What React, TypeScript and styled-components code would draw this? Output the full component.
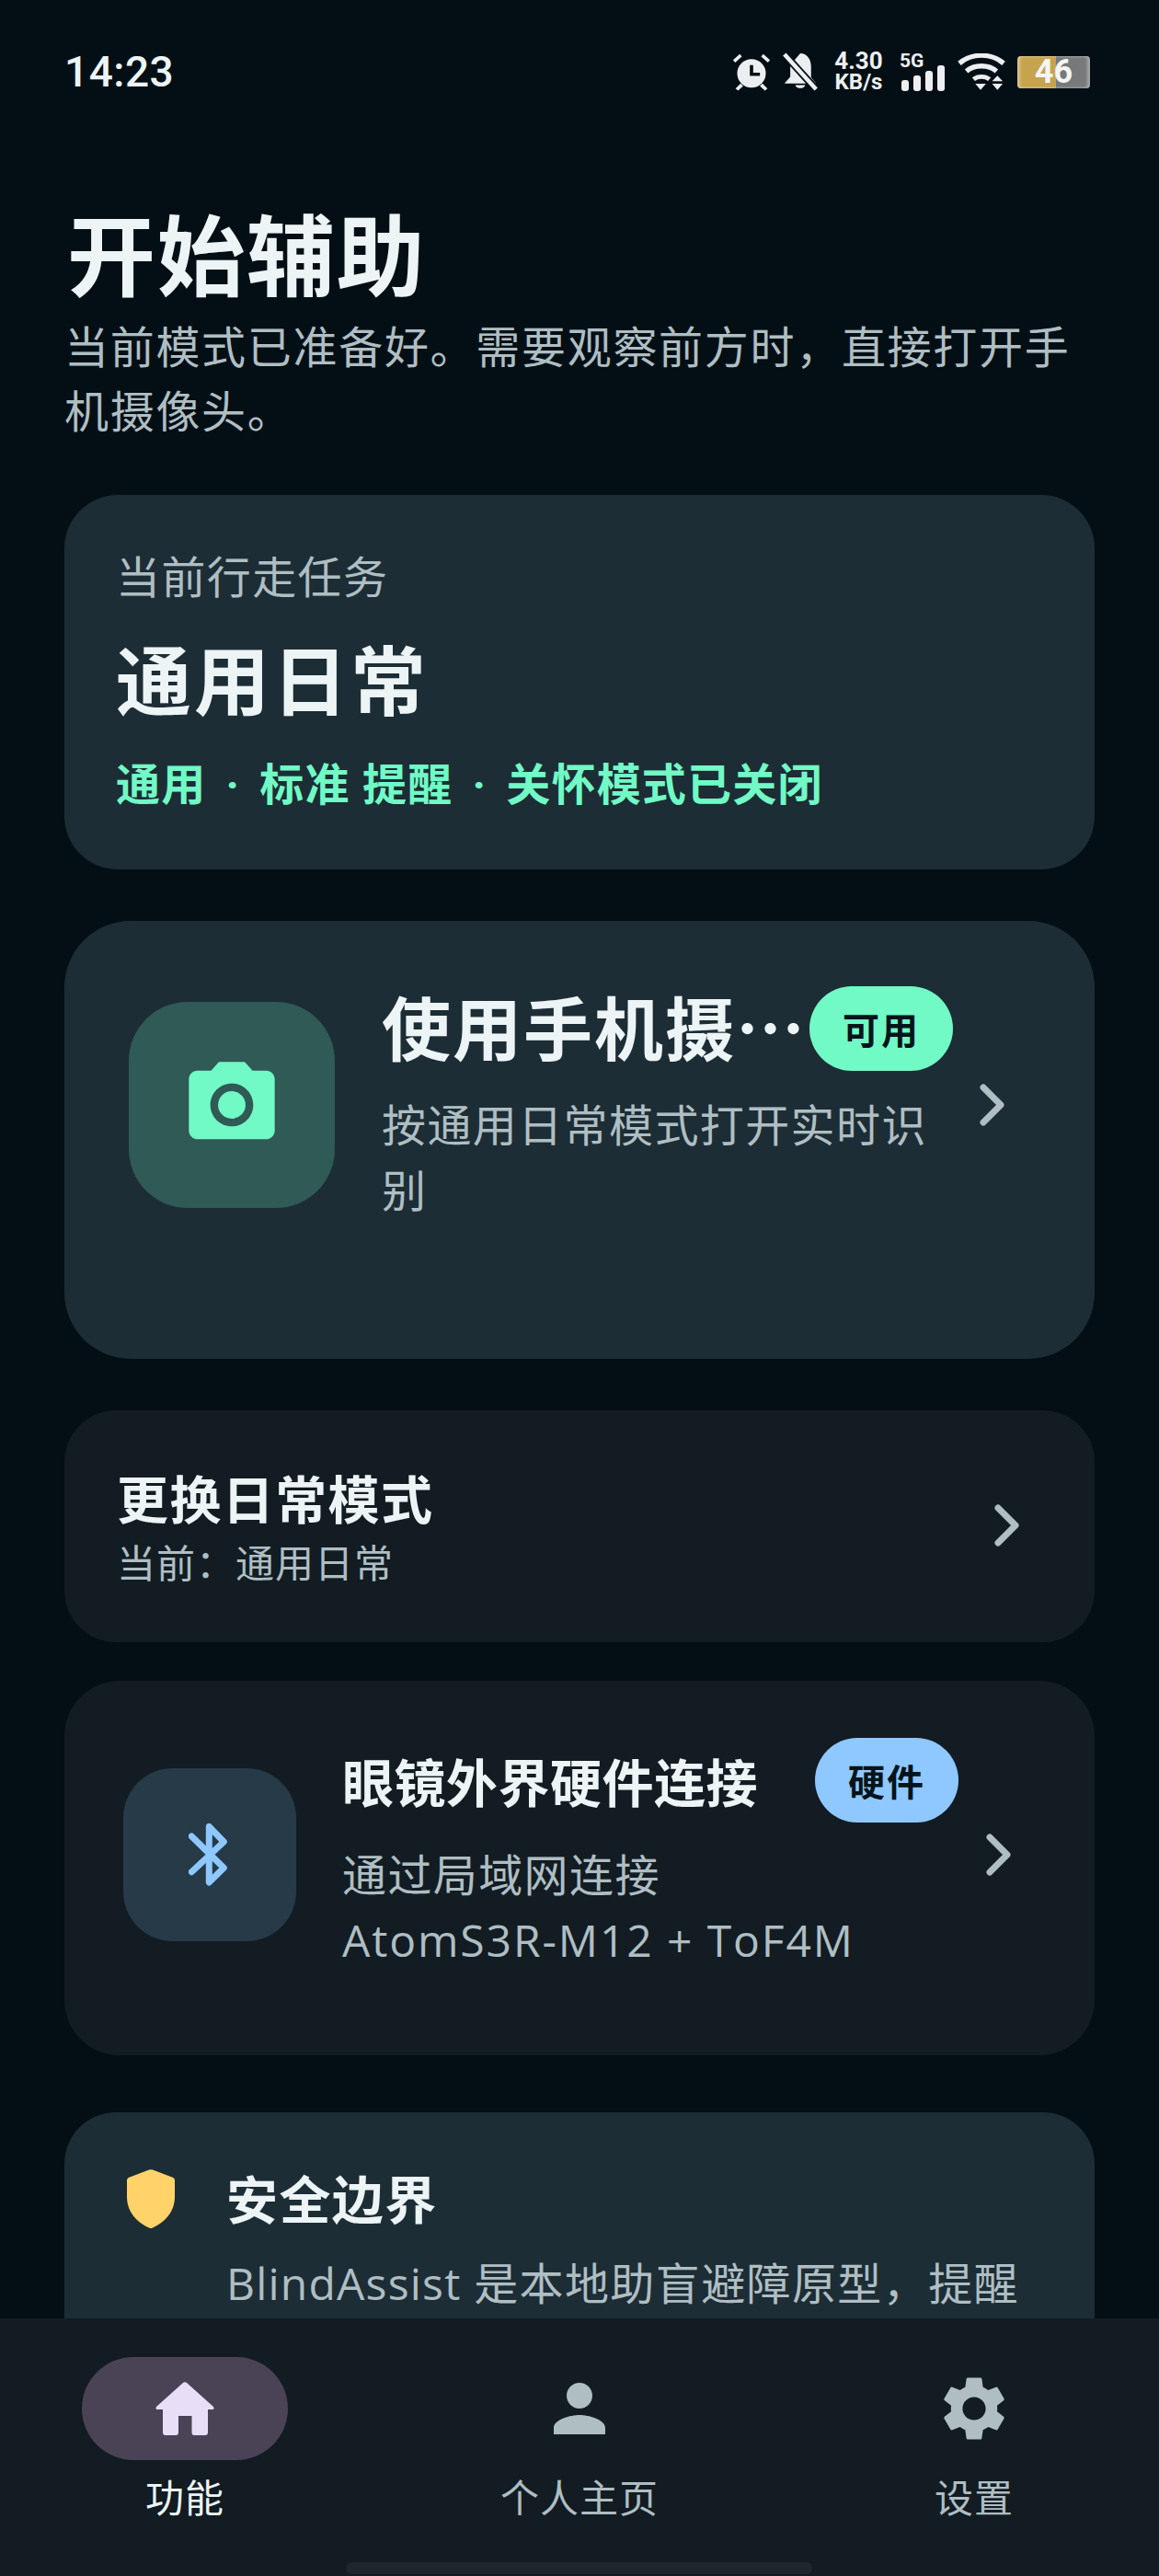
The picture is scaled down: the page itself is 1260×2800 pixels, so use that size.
import React from 'react';
import styled, { createGlobalStyle } from 'styled-components';
import { MdPerson, MdPhotoCamera, MdSettings } from 'react-icons/md';

const GlobalStyle = createGlobalStyle`
  html, body {
    margin: 0;
    padding: 0;
    background: #040f15;
  }
  * {
    box-sizing: border-box;
  }
`;

const cjk = `"Noto Sans CJK SC", sans-serif`;
const latin = `Roboto, "Noto Sans CJK SC", sans-serif`;
const prose = `"Open Sans", "Noto Sans CJK SC", sans-serif`;

const Screen = styled.div`
  width: 1260px;
  height: 2800px;
  display: flex;
  flex-direction: column;
  overflow: hidden;
  background: #040f15;
  font-family: ${latin};
  color: #ecf4f6;
`;

const StatusBar = styled.div`
  flex: none;
  height: 197px;
  padding: 48px 75px 0 70px;
  display: flex;
  align-items: flex-start;
  justify-content: space-between;
`;

const Clock = styled.div`
  font-size: 46px;
  line-height: 60px;
  font-weight: 500;
  letter-spacing: 0.5px;
`;

const StatusIcons = styled.div`
  display: flex;
  align-items: center;
  gap: 13px;
  height: 60px;
`;

const Speed = styled.div`
  width: 53px;
  font-size: 26px;
  line-height: 23px;
  font-weight: 700;
  text-align: center;
  white-space: nowrap;
  color: #eceff1;
  margin: 0 5px;
  display: flex;
  flex-direction: column;
  align-items: center;
`;

const SpeedUnit = styled.span`
  font-size: 24px;
`;

const Net = styled.div`
  position: relative;
  width: 50px;
  height: 41px;
  display: flex;
  align-items: flex-end;
  justify-content: flex-end;
`;

const NetLabel = styled.span`
  position: absolute;
  left: 0;
  top: -3px;
  font-size: 21px;
  line-height: 22px;
  font-weight: 700;
  color: #eceff1;
`;

const Battery = styled.div`
  width: 79px;
  height: 35px;
  border-radius: 4px;
  display: flex;
  align-items: center;
  justify-content: center;
  background: linear-gradient(90deg, #c6a44e 0 53%, #77797a 53% 100%);
  box-shadow: inset 3px 0 3px rgba(255, 255, 255, 0.35), inset -3px 0 3px rgba(255, 255, 255, 0.35);
  font-size: 36px;
  font-weight: 700;
  color: #f5f5f5;
`;

const Scroll = styled.main`
  flex: 1;
  min-height: 0;
  overflow: hidden;
  padding: 10px 70px 0;
  display: flex;
  flex-direction: column;
`;

const PageTitle = styled.h1`
  margin: 0;
  font-family: ${cjk};
  font-size: 96px;
  line-height: 132px;
  font-weight: 700;
  letter-spacing: 1.5px;
  padding-left: 3px;
`;

const PageIntro = styled.p`
  margin: 0 0 59px;
  font-family: ${cjk};
  font-size: 48px;
  line-height: 70px;
  letter-spacing: 1.7px;
  color: #afbec3;
`;

const Card = styled.section<{ $tone?: 'raised' | 'flat'; $radius?: number }>`
  flex: none;
  border-radius: ${(p) => p.$radius ?? 56}px;
  background: ${(p) => (p.$tone === 'flat' ? '#121c22' : '#1d2d35')};
`;

const TaskCard = styled(Card)`
  height: 407px;
  padding: 46px 56px 0;
  margin-bottom: 56px;
`;

const TaskLabel = styled.div`
  font-family: ${cjk};
  font-size: 48px;
  line-height: 80px;
  letter-spacing: 1.4px;
  color: #afbec3;
`;

const TaskName = styled.div`
  margin-top: 15px;
  font-family: ${cjk};
  font-size: 82px;
  line-height: 114px;
  font-weight: 700;
  letter-spacing: 3px;
`;

const TaskMeta = styled.div`
  margin-top: 29px;
  font-size: 48px;
  line-height: 64px;
  font-weight: 700;
  letter-spacing: 1.2px;
  color: #71f9c6;
  white-space: pre;
`;

const MetaDot = styled.span`
  margin: 0 8px;
`;

const ActionCard = styled(Card)<{ $pad: string; $height: number; $after: number }>`
  height: ${(p) => p.$height}px;
  margin-bottom: ${(p) => p.$after}px;
  padding: ${(p) => p.$pad};
  display: flex;
  align-items: center;
`;

const IconTile = styled.div<{ $size: number; $bg: string; $color: string; $after: number }>`
  flex: none;
  width: ${(p) => p.$size}px;
  height: ${(p) => p.$size}px;
  margin-right: ${(p) => p.$after}px;
  border-radius: ${(p) => Math.round(p.$size * 0.287)}px;
  background: ${(p) => p.$bg};
  color: ${(p) => p.$color};
  display: flex;
  align-items: center;
  justify-content: center;
`;

const ActionBody = styled.div`
  flex: 1;
  min-width: 0;
`;

const TitleRow = styled.div`
  height: 92px;
  display: flex;
  align-items: center;
`;

const ActionTitle = styled.div<{ $size: number; $spacing: number; $width: number; $lift?: number }>`
  width: ${(p) => p.$width}px;
  flex: none;
  margin-bottom: ${(p) => p.$lift ?? 0}px;
  font-family: ${cjk};
  font-size: ${(p) => p.$size}px;
  line-height: 1.2;
  font-weight: 700;
  letter-spacing: ${(p) => p.$spacing}px;
  white-space: nowrap;
`;

const Badge = styled.span<{ $color: string }>`
  flex: none;
  width: 156px;
  height: 92px;
  border-radius: 46px;
  background: ${(p) => p.$color};
  display: flex;
  align-items: center;
  justify-content: center;
  font-family: ${cjk};
  font-size: 40px;
  font-weight: 700;
  letter-spacing: 2px;
  color: #06141a;
`;

const ActionText = styled.div<{ $top: number }>`
  margin-top: ${(p) => p.$top}px;
  font-family: ${prose};
  font-size: 48px;
  line-height: 71px;
  letter-spacing: 1.4px;
  color: #afbec3;
`;

const LatinRun = styled.span<{ $spacing: number }>`
  letter-spacing: ${(p) => p.$spacing}px;
`;

const ChevronBox = styled.div`
  flex: none;
  width: 60px;
  display: flex;
  justify-content: center;
  color: #afbec3;
`;

const ModeCard = styled(Card)`
  height: 252px;
  margin-bottom: 42px;
  padding: 0 65px 3px 57px;
  display: flex;
  align-items: center;
`;

const ModeTitle = styled.div`
  margin-bottom: 3px;
  font-family: ${cjk};
  font-size: 56px;
  line-height: 76px;
  font-weight: 700;
  letter-spacing: 1.4px;
`;

const ModeSub = styled.div`
  font-family: ${cjk};
  font-size: 42px;
  line-height: 58px;
  letter-spacing: 1px;
  color: #afbec3;
`;

const SafetyCard = styled(Card)`
  padding: 62px 60px 0 68px;
  display: flex;
  gap: 56px;
  height: 400px;
`;

const SafetyTitle = styled.div`
  margin-top: -8px;
  font-family: ${cjk};
  font-size: 56px;
  line-height: 76px;
  font-weight: 700;
  letter-spacing: 1.4px;
`;

const SafetyText = styled.div`
  margin-top: 20px;
  font-family: ${prose};
  font-size: 48px;
  line-height: 71px;
  letter-spacing: 1.4px;
  color: #afbec3;
  white-space: nowrap;
`;

const BottomNav = styled.nav`
  flex: none;
  position: relative;
  height: 280px;
  background: #121c22;
  padding-top: 42px;
  display: grid;
  grid-template-columns: 402px 456px 402px;
  justify-items: center;
  align-items: start;
`;

const NavItem = styled.div`
  display: flex;
  flex-direction: column;
  align-items: center;
`;

const NavPill = styled.div<{ $active?: boolean }>`
  width: 224px;
  height: 112px;
  border-radius: 56px;
  display: flex;
  align-items: center;
  justify-content: center;
  background: ${(p) => (p.$active ? '#4a4356' : 'transparent')};
  color: ${(p) => (p.$active ? '#e9def8' : '#afbec3')};
`;

const NavLabel = styled.div<{ $active?: boolean }>`
  margin-top: 10px;
  font-family: ${cjk};
  font-size: 42px;
  line-height: 58px;
  letter-spacing: 1px;
  color: ${(p) => (p.$active ? '#ecf4f6' : '#afbec3')};
`;

const HomeIndicator = styled.div`
  position: absolute;
  left: 376px;
  bottom: 2px;
  width: 507px;
  height: 13px;
  border-radius: 6px;
  background: #1e272e;
`;

const Chevron: React.FC = () => (
  <svg width="30" height="48" viewBox="0 0 30 48" fill="none">
    <path d="M5 5 L24 24 L5 43" stroke="currentColor" strokeWidth="7" strokeLinecap="round" strokeLinejoin="round" />
  </svg>
);

const AlarmIcon: React.FC = () => (
  <svg width="42" height="42" viewBox="0 0 46 46" fill="#eceff1">
    <circle cx="23" cy="25" r="17" />
    <path d="M9 2 L1 9 L3.500 12 L11.500 5 Z M37 2 L45 9 L42.500 12 L34.500 5 Z M10 37 L4 43 L7 45.500 L13 40 Z M36 37 L42 43 L39 45.500 L33 40 Z" />
    <path d="M21 15 H25 V24 H33 V28 H21 Z" fill="#040f15" />
  </svg>
);

const MutedBellIcon: React.FC = () => (
  <svg width="38" height="42" viewBox="0 0 42 46" fill="#eceff1">
    <path d="M21 1 C29 1 34 8 34 17 V30 L40 37 H2 L9 29 V15 Z" />
    <path d="M15 39 H27 C26 44 16 44 15 39 Z" />
    <path d="M2 2 L40 44" stroke="#040f15" strokeWidth="9" />
    <path d="M2 2 L40 44" stroke="#eceff1" strokeWidth="5" />
  </svg>
);

const SignalIcon: React.FC = () => (
  <svg width="48" height="28" viewBox="0 0 48 28" fill="#eceff1">
    <rect x="0" y="16" width="8" height="12" rx="3" />
    <rect x="13" y="11" width="8" height="17" rx="3" />
    <rect x="26" y="6" width="8" height="22" rx="3" />
    <rect x="39" y="0" width="8" height="28" rx="3" />
  </svg>
);

const WifiIcon: React.FC = () => (
  <svg width="52" height="41" viewBox="0 0 54 42" fill="none" stroke="#eceff1" strokeWidth="5.500">
    <path d="M2 11 C16 -1 38 -1 52 11" />
    <path d="M10 20 C19 12 35 12 44 20" />
    <path d="M18 29 C23 25 31 25 36 29" strokeWidth="5" />
    <path d="M20 34 H32 L26 41 Z M39 31 L45 25 L51 31 Z M39 34 H51 L45 41 Z" fill="#eceff1" stroke="none" />
  </svg>
);

const BluetoothIcon: React.FC = () => (
  <svg width="46" height="68" viewBox="0 0 46 68" fill="none">
    <path
      d="M3.300 14 L38.300 48.300 L22.300 64 V3.300 L38.300 20 L3.300 52.700"
      stroke="currentColor"
      strokeWidth="7"
      strokeLinecap="round"
      strokeLinejoin="round"
    />
  </svg>
);

const ShieldIcon: React.FC = () => (
  <svg width="52" height="64" viewBox="0 0 52 64" fill="#ffd369">
    <path d="M24 .5 Q26 -.2 28 .5 L49 8.500 Q52 9.500 52 12 V30 C52 46 41 58 27.500 63.700 Q26 64.300 24.500 63.700 C11 58 0 46 0 30 V12 Q0 9.500 3 8.500 Z" />
  </svg>
);

const HomeIcon: React.FC = () => (
  <svg width="64" height="58" viewBox="0 0 64 58" fill="currentColor">
    <path d="M30 1 Q32 -.5 34 1 L63 27 Q64.500 30 62 30 H57 V55 Q57 58 54 58 H42 Q39.500 58 39.500 55 V37 H25 V55 Q25 58 22 58 H11 Q8 58 8 55 V30 H2 Q-.5 30 1 27 Z" />
  </svg>
);

const App: React.FC = () => (
  <Screen>
    <GlobalStyle />
    <StatusBar>
      <Clock>14:23</Clock>
      <StatusIcons>
        <AlarmIcon />
        <MutedBellIcon />
        <Speed>
          <span>4.30</span>
          <SpeedUnit>KB/s</SpeedUnit>
        </Speed>
        <Net>
          <NetLabel>5G</NetLabel>
          <SignalIcon />
        </Net>
        <WifiIcon />
        <Battery>46</Battery>
      </StatusIcons>
    </StatusBar>

    <Scroll>
      <PageTitle>开始辅助</PageTitle>
      <PageIntro>当前模式已准备好。需要观察前方时，直接打开手机摄像头。</PageIntro>

      <TaskCard $radius={58}>
        <TaskLabel>当前行走任务</TaskLabel>
        <TaskName>通用日常</TaskName>
        <TaskMeta>
          通用 <MetaDot>·</MetaDot> 标准 提醒 <MetaDot>·</MetaDot> 关怀模式已关闭
        </TaskMeta>
      </TaskCard>

      <ActionCard $radius={72} $pad="73px 81px 150px 70px" $height={476} $after={56}>
        <IconTile $size={224} $bg="#2f5a55" $color="#71f9c6" $after={51}>
          <MdPhotoCamera size={112} />
        </IconTile>
        <ActionBody>
          <TitleRow>
            <ActionTitle $size={75} $spacing={2} $width={465} $lift={6}>
              使用手机摄…
            </ActionTitle>
            <Badge $color="#71f9c6">可用</Badge>
          </TitleRow>
          <ActionText $top={23}>按通用日常模式打开实时识别</ActionText>
        </ActionBody>
        <ChevronBox>
          <Chevron />
        </ChevronBox>
      </ActionCard>

      <ModeCard $tone="flat">
        <ActionBody>
          <ModeTitle>更换日常模式</ModeTitle>
          <ModeSub>当前：通用日常</ModeSub>
        </ActionBody>
        <ChevronBox>
          <Chevron />
        </ChevronBox>
      </ModeCard>

      <ActionCard $tone="flat" $radius={60} $pad="64px 74px 93px 64px" $height={407} $after={62}>
        <IconTile $size={188} $bg="#263a48" $color="#8fc8ff" $after={50}>
          <BluetoothIcon />
        </IconTile>
        <ActionBody>
          <TitleRow>
            <ActionTitle $size={56} $spacing={0.5} $width={514}>
              眼镜外界硬件连接
            </ActionTitle>
            <Badge $color="#8fc8ff">硬件</Badge>
          </TitleRow>
          <ActionText $top={21}>
            通过局域网连接
            <br />
            <LatinRun $spacing={1.9}>AtomS3R-M12 + ToF4M</LatinRun>
          </ActionText>
        </ActionBody>
        <ChevronBox>
          <Chevron />
        </ChevronBox>
      </ActionCard>

      <SafetyCard>
        <ShieldIcon />
        <div>
          <SafetyTitle>安全边界</SafetyTitle>
          <SafetyText>
            <LatinRun $spacing={1.2}>BlindAssist </LatinRun>是本地助盲避障原型，提醒
          </SafetyText>
        </div>
      </SafetyCard>
    </Scroll>

    <BottomNav>
      <NavItem>
        <NavPill $active>
          <HomeIcon />
        </NavPill>
        <NavLabel $active>功能</NavLabel>
      </NavItem>
      <NavItem>
        <NavPill>
          <MdPerson size={84} />
        </NavPill>
        <NavLabel>个人主页</NavLabel>
      </NavItem>
      <NavItem>
        <NavPill>
          <MdSettings size={84} />
        </NavPill>
        <NavLabel>设置</NavLabel>
      </NavItem>
      <HomeIndicator />
    </BottomNav>
  </Screen>
);

export default App;
